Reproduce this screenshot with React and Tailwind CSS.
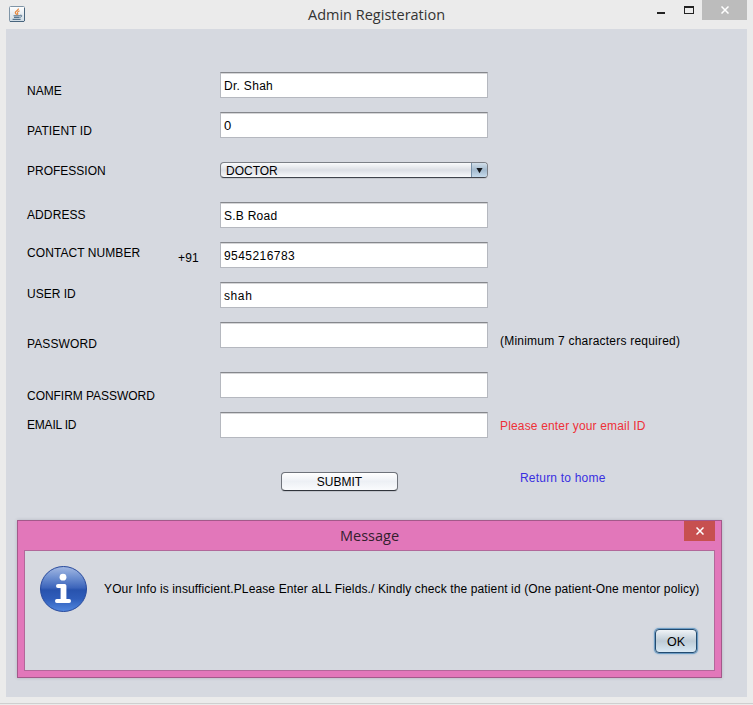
const rows = [
  { label: "NAME", value: "Dr. Shah", height: "h-10", offset: "mt-[11px]", valueClass: "tracking-[0.3px]" },
  { label: "PATIENT ID", value: "0", height: "h-[50px]", offset: "mt-[11px]", labelClass: "tracking-[0.1px]", valueClass: "text-[13px]" },
  { label: "PROFESSION", value: "DOCTOR", select: true, height: "h-10", offset: "mt-px" },
  { label: "ADDRESS", value: "S.B Road", height: "h-10", offset: "mt-[5px]", labelClass: "tracking-[0.1px]", valueClass: "tracking-[0.25px]" },
  { label: "CONTACT NUMBER", prefix: "+91", value: "9545216783", height: "h-10", offset: "mt-[3px]", labelClass: "tracking-[0.07px]", valueClass: "tracking-[0.45px]" },
  { label: "USER ID", value: "shah", height: "h-10", offset: "mt-1", valueClass: "tracking-[0.6px]" },
  { label: "PASSWORD", value: "", height: "h-[50px]", offset: "mt-[14px]", labelClass: "tracking-[0.1px]", hint: "(Minimum 7 characters required)", hintClass: "mt-[11px] tracking-[0.22px]" },
  { label: "CONFIRM PASSWORD", value: "", height: "h-10", offset: "mt-4", labelClass: "tracking-[-0.04px]" },
  { label: "EMAIL ID", value: "", height: "h-[58px]", offset: "mt-[5px]", labelClass: "tracking-[-0.2px]", hint: "Please enter your email ID", hintClass: "mt-1.5 text-[#ee3038] tracking-[0.16px]" },
];

function TextBox({ value, className = "" }) {
  return (
    <div className="h-[26px] w-[268px] border border-[#b5b8bf] border-t-[#85878c] bg-white pl-[3px] pt-[5px] shadow-[inset_0_1px_0_#d5d5d7]">
      <span className={`block ${className}`}>{value}</span>
    </div>
  );
}

function ComboBox({ value }) {
  return (
    <div className="flex h-4 w-[268px] overflow-hidden rounded-[4px] border border-[#7c8087] border-b-[#40444c] bg-linear-to-b from-[#fafbfc] via-[#dcdfe5] to-[#f8f9fb] shadow-[0_1px_0_#c3c6cc]">
      <span className="flex-1 pl-[5px]">{value}</span>
      <span className="flex w-4 items-center justify-center border-l border-[#7690a8] bg-linear-to-b from-[#d2dfea] via-[#a3bace] to-[#c6dbed]">
        <svg width="7" height="7" viewBox="0 0 8 7"><path d="M0.5 0.5h7L4 6.7z" fill="#14181d" /></svg>
      </span>
    </div>
  );
}

function Cross() {
  return (
    <svg width="8" height="8" viewBox="0 0 8 8" fill="none" stroke="#fff" strokeWidth="1.5">
      <path d="M0.5 0.5l7 7M7.5 0.5l-7 7" />
    </svg>
  );
}

function JavaIcon() {
  return (
    <svg width="16" height="16" viewBox="0 0 16 16" fill="none">
      <defs>
        <linearGradient id="jv" x1="0" y1="0" x2="0" y2="1"><stop stopColor="#fff" /><stop offset="1" stopColor="#cfdbe4" /></linearGradient>
      </defs>
      <rect x="0.5" y="0.5" width="15" height="15" rx="1" fill="url(#jv)" stroke="#7f95a7" />
      <path d="M1 15.5h14M15.5 2v13" stroke="#49657d" />
      <path d="M9.3 2.5c.8 1.6-3.2 2.6-3 4.2.1.8 1 1.3 1.4 2.1M10.5 4.8c-1 .5-2.4 1.2-2.1 2.1.3.7.8 1 .1 1.9" stroke="#e5873c" strokeWidth="1.2" />
      <path d="M4.5 9.7h6.5M5 11.4h5.5M3.6 13.4h8" stroke="#57758e" strokeWidth="1.1" />
      <path d="M11 9.3c2.4-.8 2.4 1.7-.2 2" stroke="#57758e" />
    </svg>
  );
}

function InfoIcon() {
  return (
    <svg width="48" height="47" viewBox="0 0 48 47" className="shrink-0">
      <defs>
        <linearGradient id="ball" x1="0" y1="0" x2="0" y2="1">
          <stop stopColor="#a4b9e3" /><stop offset=".25" stopColor="#6c8ed0" /><stop offset=".47" stopColor="#3d65bb" />
          <stop offset=".52" stopColor="#2853ae" /><stop offset=".72" stopColor="#2f5dba" /><stop offset="1" stopColor="#5288df" />
        </linearGradient>
      </defs>
      <ellipse cx="23.5" cy="23" rx="23" ry="22.5" fill="url(#ball)" stroke="#27499c" />
      <circle cx="23" cy="11.2" r="3.4" fill="#fff" />
      <path d="M18 18h6.6q1.8 0 1.8 1.8v13.2h2.8q1.8 0 1.8 2t-1.8 2H16.8q-1.8 0-1.8-2t1.8-2h3.8V22H18q-2 0-2-2t2-2z" fill="#fff" />
    </svg>
  );
}

function MessageDialog() {
  return (
    <div className="absolute left-[17px] top-[520px] flex h-[158px] w-[705px] flex-col border border-[#a3598a] bg-[#e277ba] px-1.5 pb-1.5 shadow-[0_0_3px_rgba(70,70,90,0.25)]">
      <div className="flex h-[29px] shrink-0 items-start">
        <h2 className="flex-1 pl-[31px] pt-[5px] text-center font-['Open_Sans',sans-serif] text-[14.5px] leading-5 text-[#33202e]">Message</h2>
        <button className="flex h-5 w-[31px] items-center justify-center bg-[#c75050]"><Cross /></button>
      </div>
      <div className="flex flex-1 flex-col border border-[#b2689a] bg-[#d6d9e0]">
        <div className="flex pl-[15px] pt-[15px]">
          <InfoIcon />
          <p className="ml-4 mt-[15px] whitespace-nowrap tracking-[0.124px]">YOur Info is insufficient.PLease Enter aLL Fields./ Kindly check the patient id (One patient-One mentor policy)</p>
        </div>
        <button className="ml-auto mr-[17px] mt-4 h-6 w-[42px] rounded-[4px] border border-[#234b70] bg-linear-to-b from-[#f0f4f7] via-[#bdcbd6] to-[#d9e9f4] pt-px text-[12.5px] shadow-[0_0_0_1px_#6d9cc4,0_0_2px_1px_#89b0cf]">OK</button>
      </div>
    </div>
  );
}

export default function App() {
  return (
    <div className="relative flex h-[705px] w-[753px] flex-col overflow-hidden bg-[#ebebeb] px-1.5 font-['Liberation_Sans',Arial,sans-serif] text-[12px] leading-4 text-black">
      <header className="flex h-[29px] shrink-0 items-start">
        <span className="ml-[3px] mt-1.5"><JavaIcon /></span>
        <h1 className="ml-[283px] mt-[5px] flex-1 font-['Open_Sans',sans-serif] text-[14.5px] leading-5 text-[#333]">Admin Registeration</h1>
        <span className="mr-[19px] mt-3 h-0.5 w-2 bg-[#222]" />
        <span className="mr-2 mt-1.5 h-2 w-2.5 border border-t-2 border-[#222]" />
        <button className="flex h-5 w-[45px] items-center justify-center bg-[#bcbcbc]"><Cross /></button>
      </header>
      <main className="h-[668px] w-[741px] shrink-0 bg-[#d6d9e0] pl-[21px] pt-[43px]">
        {rows.map((row) => (
          <div key={row.label} className={`flex items-start ${row.height}`}>
            <span className={`w-[151px] whitespace-nowrap ${row.offset} ${row.labelClass || ""}`}>{row.label}</span>
            <span className="mt-2 w-[42px] tracking-[0.2px]">{row.prefix}</span>
            {row.select ? <ComboBox value={row.value} /> : <TextBox value={row.value} className={row.valueClass} />}
            {row.hint && <span className={`ml-3 whitespace-nowrap ${row.hintClass}`}>{row.hint}</span>}
          </div>
        ))}
        <div className="flex items-start">
          <button className="ml-[254px] mt-0.5 h-[19px] w-[117px] rounded-[4px] border border-[#6e727a] border-b-[#30343b] bg-linear-to-b from-white via-[#edf0f5] to-[#fafbfd] pt-px leading-4 shadow-[0_1px_0_#c0c3ca]">SUBMIT</button>
          <a className="ml-[122px] tracking-[0.2px] text-[#392fe0]">Return to home</a>
        </div>
      </main>
      <div className="mx-[-6px] mt-1.5 h-px shrink-0 bg-[#cfcfcf]" />
      <MessageDialog />
    </div>
  );
}
